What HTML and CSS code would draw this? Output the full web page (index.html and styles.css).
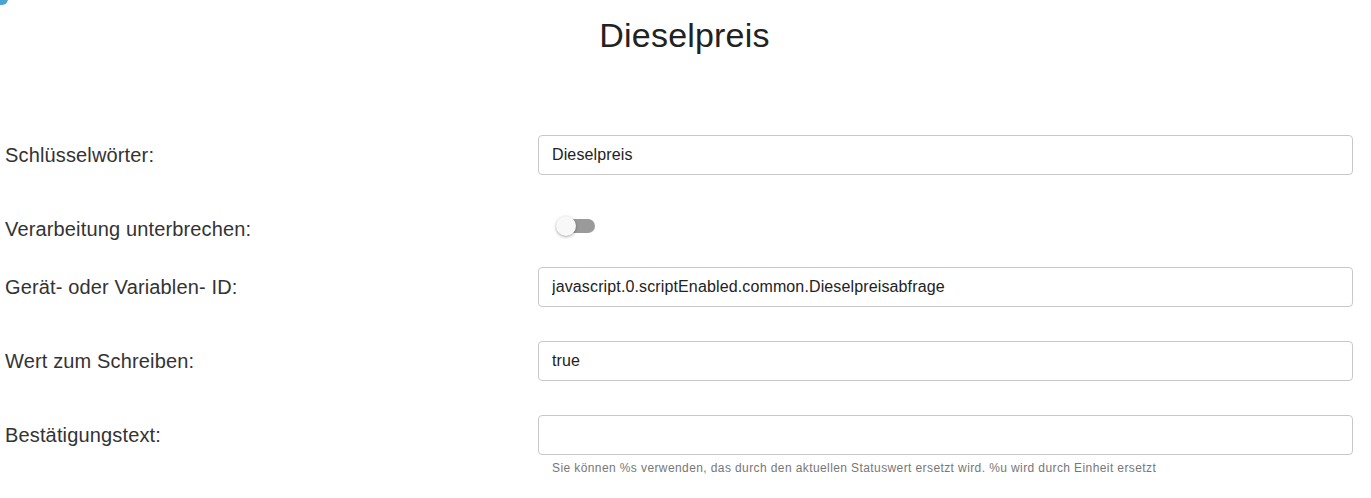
FILE: index.html
```html
<!DOCTYPE html>
<html lang="de">
<head>
<meta charset="utf-8">
<title>Dieselpreis</title>
<link rel="stylesheet" href="styles.css">
</head>
<body>
<div class="corner"></div>
<main class="page">
  <h1 class="title">Dieselpreis</h1>
  <form class="form">
    <div class="row">
      <label class="label">Schlüsselwörter:</label>
      <div class="field"><input class="input" type="text" value="Dieselpreis"></div>
    </div>
    <div class="row row-switch">
      <label class="label">Verarbeitung unterbrechen:</label>
      <div class="field">
        <span class="switch"><span class="track"></span><span class="knob"></span></span>
      </div>
    </div>
    <div class="row">
      <label class="label">Gerät- oder Variablen- ID:</label>
      <div class="field"><input class="input" type="text" value="javascript.0.scriptEnabled.common.Dieselpreisabfrage"></div>
    </div>
    <div class="row">
      <label class="label">Wert zum Schreiben:</label>
      <div class="field"><input class="input" type="text" value="true"></div>
    </div>
    <div class="row row-last">
      <label class="label">Bestätigungstext:</label>
      <div class="field">
        <input class="input" type="text" value="">
        <div class="help">Sie können %s verwenden, das durch den aktuellen Statuswert ersetzt wird. %u wird durch Einheit ersetzt</div>
      </div>
    </div>
  </form>
</main>
</body>
</html>
```

FILE: styles.css
```css
* { box-sizing: border-box; }
html, body { margin: 0; padding: 0; background: #fff; }
body {
  font-family: "Liberation Sans", Arial, sans-serif;
  color: #333;
  width: 1371px;
  height: 498px;
  overflow: hidden;
  position: relative;
}
.corner {
  position: absolute;
  left: -4px;
  top: -6px;
  width: 12px;
  height: 11px;
  background: #4ba3d4;
  border-radius: 0 0 6px 0;
}
.page {
  padding-top: 15px;
}
.title {
  margin: 0;
  font-weight: normal;
  font-size: 34px;
  line-height: 40px;
  letter-spacing: 0.2px;
  text-align: center;
  color: #222;
  padding-right: 2px;
}
.form {
  margin-top: 80px;
  display: flex;
  flex-direction: column;
}
.row {
  display: flex;
  height: 74px;
  align-items: flex-start;
}
.label {
  width: 538px;
  padding-left: 5px;
  font-size: 20px;
  line-height: 24px;
  letter-spacing: 0.15px;
  color: #333;
  margin-top: 8px;
}
.field {
  width: 815px;
}
.input {
  display: block;
  width: 100%;
  height: 40px;
  border: 1px solid #c8c8c8;
  border-radius: 4px;
  padding: 0 13px;
  font-family: "Liberation Sans", Arial, sans-serif;
  font-size: 16px;
  letter-spacing: 0.13px;
  color: #222;
  background: #fff;
  outline: none;
}
.row-switch { height: 58px; }
.row-switch .label { margin-top: 8px; }
.switch {
  position: relative;
  display: block;
  margin-left: 18px;
  margin-top: 7px;
  width: 40px;
  height: 20px;
}
.track {
  position: absolute;
  left: 3px;
  top: 3px;
  width: 36px;
  height: 14px;
  border-radius: 7px;
  background: #9a9a9a;
}
.knob {
  position: absolute;
  left: 0;
  top: 0;
  width: 20px;
  height: 20px;
  border-radius: 50%;
  background: #f8f8f8;
  box-shadow: 0 1px 3px rgba(0,0,0,0.35);
}
.help {
  margin-top: 5px;
  padding-left: 14px;
  font-size: 12px;
  line-height: 16px;
  letter-spacing: 0.4px;
  color: #777;
}
```
